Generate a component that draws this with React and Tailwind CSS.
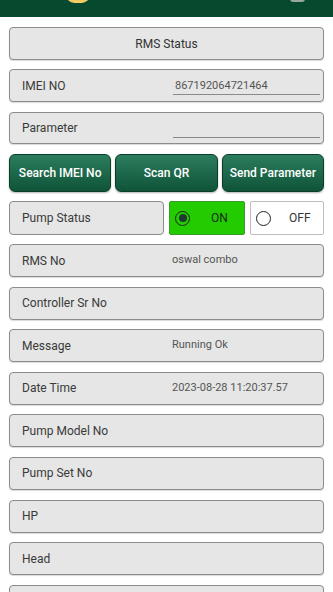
const font = { fontFamily: "Roboto, 'Liberation Sans', sans-serif" };

const Field = ({ label, value, center, underline, h = "h-[33px]" }) => (
  <div className={`flex ${h} items-center rounded-[4px] border border-[#8c8c8c] bg-[#e5e6e5] shadow-[0_1px_1px_rgba(0,0,0,0.15)]`}>
    {center ? (
      <span className="w-full text-center text-[12px] text-[#333]">{label}</span>
    ) : (
      <>
        <span className="w-[150px] shrink-0 pl-[12px] text-[12px] text-[#3a3a3a]">
          {label}
        </span>
        {underline ? (
          <div className="mr-[3px] flex h-full flex-1 flex-col justify-center pl-[13px] pt-[2px]">
            <div className="flex h-[17px] items-end border-b border-[#8a8a8a] pb-[2px] pl-[2px]">
              <span className="text-[11px] leading-[13px] text-[#555]">{value}</span>
            </div>
          </div>
        ) : (
          <span className="pl-[12px] text-[11px] text-[#555]">{value}</span>
        )}
      </>
    )}
  </div>
);

const GreenButton = ({ children }) => (
  <button className="flex h-[38px] flex-1 items-center justify-center rounded-[6px] border border-[#0b3d28] bg-gradient-to-b from-[#2b7d5d] to-[#0f5439] text-[12px] font-medium text-white shadow-[0_1px_2px_rgba(0,0,0,0.3)]">
    {children}
  </button>
);

const Radio = ({ checked }) => (
  <span className="flex h-[15px] w-[15px] items-center justify-center rounded-full border-[1.5px] border-[#222]">
    {checked && <span className="h-[8px] w-[8px] rounded-full bg-[#1f3b2f]" />}
  </span>
);

export default function App() {
  const rows = [
    ["RMS No", "oswal combo"],
    ["Controller Sr No", ""],
    ["Message", "Running Ok"],
    ["Date Time", "2023-08-28 11:20:37.57"],
    ["Pump Model No", ""],
    ["Pump Set No", ""],
    ["HP", ""],
    ["Head", ""],
    ["", ""],
  ];

  return (
    <div className="h-[592px] w-[333px] overflow-hidden bg-white" style={font}>
      <div className="relative h-[17px] overflow-hidden bg-[#054a2e]">
        <div className="absolute left-[66px] top-[-14px] h-[17px] w-[24px] rounded-full bg-gradient-to-b from-[#c98a10] to-[#f7d36a]" />
        <div className="absolute left-[290px] top-[-6px] h-[8px] w-[15px] rounded-[3px] bg-[#9aa59d]" />
      </div>

      <div className="flex flex-col px-[9px] pt-[10px]">
        <Field label="RMS Status" center />
        <div className="mt-[9px]">
          <Field label="IMEI NO" value="867192064721464" underline />
        </div>
        <div className="mt-[10px]">
          <Field label="Parameter" value="" underline h="h-[32px]" />
        </div>

        <div className="mt-[10px] flex gap-[4px]">
          <GreenButton>Search IMEI No</GreenButton>
          <GreenButton>Scan QR</GreenButton>
          <GreenButton>Send Parameter</GreenButton>
        </div>

        <div className="mt-[9px] flex h-[34px] gap-[5px]">
          <div className="flex w-[155px] items-center rounded-[4px] border border-[#8c8c8c] bg-[#e5e6e5] pl-[12px] text-[12px] text-[#3a3a3a]">
            Pump Status
          </div>
          <div className="flex w-[76px] items-center rounded-[2px] border border-[#3a9a2a] bg-[#22cc00] pl-[5px] text-[12px] text-[#1a2a1a]">
            <Radio checked />
            <span className="ml-[21px]">ON</span>
          </div>
          <div className="flex flex-1 items-center rounded-[2px] border border-[#bdbdbd] bg-white pl-[5px] text-[12px] text-[#333]">
            <Radio />
            <span className="ml-[18px]">OFF</span>
          </div>
        </div>

        <div className="mt-[9px] flex flex-col gap-[9.6px]">
          {rows.map(([label, value], i) => (
            <Field key={i} label={label} value={value} />
          ))}
        </div>
      </div>
    </div>
  );
}
